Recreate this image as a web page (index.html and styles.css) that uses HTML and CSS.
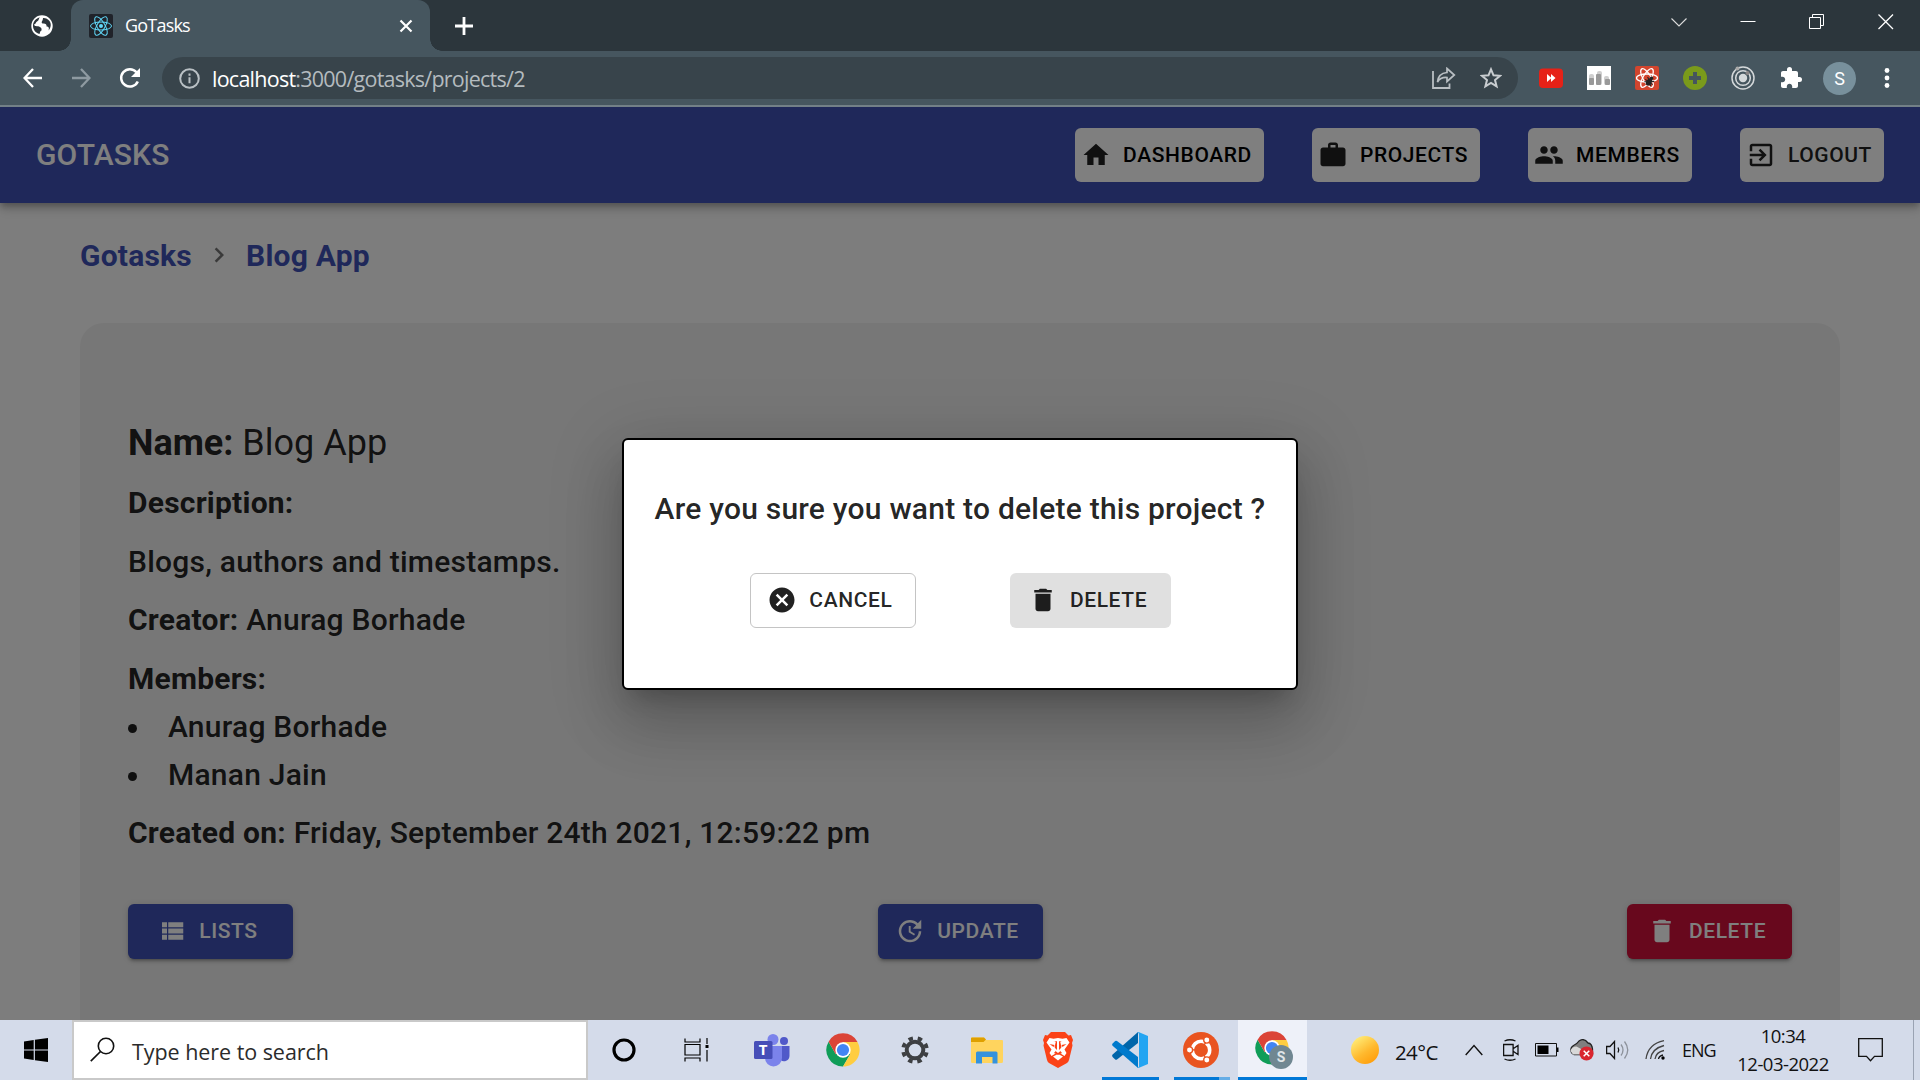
FILE: index.html
```html
<!DOCTYPE html>
<html lang="en">
<head>
<meta charset="utf-8">
<title>GoTasks</title>
<link rel="stylesheet" href="styles.css">
</head>
<body>
<div class="screen">
  <header class="tabstrip">
    <div class="pinned"><svg width="22" height="22" viewBox="0 0 22 22"><circle cx="11" cy="11" r="10.700" fill="#fff"/><path d="M9 2.600C7 4 8.500 5.600 6 6.500C4.500 7.500 5 9 3 9.500C3.500 11.500 6 11 8 11.500C10 12.500 11 13 10.500 15.500C9 16 9 18 8.500 19C4.500 18 2 14.500 2 11C2 6.500 5 3.200 9 2.600ZM12 3C12 6 9.500 7 11.500 8.500C14 8 16 9 15.500 11.500C17.500 11.500 18.500 12.500 17.500 15.500C20.500 12 20.500 7.500 17.500 5C16 3.500 14 2.700 12 3Z" fill="#2c353b"/></svg></div>
    <div class="tab">
      <svg class="favicon" width="24" height="24" viewBox="0 0 24 24"><rect width="24" height="24" rx="2" fill="#20232a"/><g fill="none" stroke="#61dafb" stroke-width="1"><ellipse cx="12" cy="12" rx="10.500" ry="4"/><ellipse cx="12" cy="12" rx="10.500" ry="4" transform="rotate(60 12 12)"/><ellipse cx="12" cy="12" rx="10.500" ry="4" transform="rotate(120 12 12)"/></g><circle cx="12" cy="12" r="2" fill="#61dafb"/></svg>
      <span class="tab-title">GoTasks</span>
      <svg class="tab-close" width="14" height="14" viewBox="0 0 14 14"><path d="M1.500 1.500l11 11M12.500 1.500l-11 11" stroke="#fff" stroke-width="2.200"/></svg>
    </div>
    <svg class="newtab" width="18" height="18" viewBox="0 0 18 18"><path d="M9 0v18M0 9h18" stroke="#fff" stroke-width="2.800"/></svg>
    <div class="window-controls">
      <svg width="16" height="16" viewBox="0 0 16 16"><path d="M.5 4.500l7.500 7.500 7.500-7.500" fill="none" stroke="#ddd" stroke-width="1.100"/></svg>
      <svg width="16" height="16" viewBox="0 0 16 16"><path d="M.5 7.500h15" stroke="#fff"/></svg>
      <svg width="16" height="16" viewBox="0 0 16 16"><path d="M.5 3.500h11v11H.5zM3.500 3.500v-3h11v11h-3" fill="none" stroke="#fff"/></svg>
      <svg width="16" height="16" viewBox="0 0 16 16"><path d="M.5.5l14.500 14.500M15 .5L.5 15" stroke="#fff" stroke-width="1.300"/></svg>
    </div>
  </header>
  <div class="toolbar">
    <div class="history">
      <svg width="20" height="20" viewBox="0 0 20 20"><path d="M19 10H2M10 1L1.500 10L10 19" fill="none" stroke="#fff" stroke-width="2.300"/></svg>
      <svg width="20" height="20" viewBox="0 0 20 20"><path d="M1 10h17M10 1l8.500 9L10 19" fill="none" stroke="#8e9aa1" stroke-width="2.300"/></svg>
      <svg width="22" height="22" viewBox="0 0 22 22"><path d="M18.800 14.500A8.700 8.700 0 1 1 17.500 5.200" fill="none" stroke="#fff" stroke-width="2.500"/><path d="M21 1v9h-9z" fill="#fff"/></svg>
    </div>
    <div class="omnibox">
      <svg width="21" height="21" viewBox="0 0 21 21"><circle cx="10.500" cy="10.500" r="9.300" fill="none" stroke="#b9c0c4" stroke-width="2"/><path d="M10.500 9.300v6M10.500 5.500v2.200" stroke="#b9c0c4" stroke-width="2"/></svg>
      <span class="url"><b>localhost</b>:3000/gotasks/projects/2</span>
      <svg class="share" width="24" height="22" viewBox="0 0 24 22"><path d="M1 4v17h16.500v-4.500" fill="none" stroke="#b9bfc3" stroke-width="1.800"/><path d="M15 1.500l7.300 6.500L15 14.500v-4c-5-.3-7.500 1-9.500 4.500C6 9 9.500 6 15 5.500z" fill="none" stroke="#b9bfc3" stroke-width="1.700"/></svg>
      <svg width="22" height="22" viewBox="0 0 22 22"><path d="M11 2.300l2.500 6 6.500.5-5 4.200 1.600 6.300L11 15.900l-5.600 3.400L7 13 2 8.800l6.500-.5z" fill="none" stroke="#c9cdd0" stroke-width="2"/></svg>
    </div>
    <div class="extensions">
      <svg width="24" height="24" viewBox="0 0 24 24"><rect y="2.500" width="24" height="19.500" rx="4" fill="#e62117"/><path d="M8 8l4.500 4L8 16zM12 8l4.500 4-4.500 4z" fill="#fff"/></svg>
      <svg width="24" height="24" viewBox="0 0 24 24"><rect width="24" height="24" fill="#fff"/><g fill="#cfcfcf"><rect x="2" y="8" width="5" height="11" rx="2"/><rect x="10" y="5" width="5" height="14" rx="2"/><rect x="17" y="10" width="5" height="9" rx="2"/></g><g fill="#999"><rect x="2" y="12" width="5" height="7" rx="1"/><rect x="9" y="8" width="5" height="11" rx="1"/><rect x="18" y="13" width="5" height="6" rx="1"/></g></svg>
      <svg width="24" height="24" viewBox="0 0 24 24"><rect width="24" height="24" rx="2" fill="#d3452e"/><g fill="none" stroke="#fff" stroke-width="1.300"><ellipse cx="12" cy="12" rx="10.500" ry="4"/><ellipse cx="12" cy="12" rx="10.500" ry="4" transform="rotate(60 12 12)"/><ellipse cx="12" cy="12" rx="10.500" ry="4" transform="rotate(120 12 12)"/></g><g transform="rotate(35 14 16)"><ellipse cx="14" cy="16" rx="2.600" ry="4" fill="#222"/><circle cx="14" cy="11.500" r="1.800" fill="#222"/><path d="M10 12.500l8 6M18 12.500l-8 6M9.500 16h9" stroke="#222" stroke-width="1.100"/></g></svg>
      <svg width="24" height="24" viewBox="0 0 24 24"><circle cx="12" cy="12" r="12" fill="#7a9a1b"/><path d="M12 6v12M6 12h12" stroke="#46555d" stroke-width="4"/></svg>
      <svg width="24" height="24" viewBox="0 0 24 24"><g fill="none" stroke="#d4d8da" stroke-width="1.500"><circle cx="12" cy="12" r="11"/><circle cx="12" cy="12" r="7.300"/></g><circle cx="12" cy="12" r="4.200" fill="#d4d8da"/><circle cx="6.500" cy="2.500" r="2" fill="#a9a9a9"/><circle cx="16.500" cy="7" r="2" fill="#8a8585"/></svg>
      <svg width="24" height="24" viewBox="0 0 24 24"><path d="M20.500 11H19V7c0-1.100-.9-2-2-2h-4V3.500a2.500 2.500 0 0 0-5 0V5H4c-1.100 0-1.990.9-1.990 2v3.800H3.500c1.490 0 2.700 1.210 2.700 2.700s-1.210 2.700-2.700 2.700H2V20c0 1.100.9 2 2 2h3.800v-1.500c0-1.490 1.210-2.700 2.700-2.700s2.700 1.210 2.700 2.700V22H17c1.100 0 2-.9 2-2v-4h1.500a2.500 2.500 0 0 0 0-5z" fill="#fff"/></svg>
      <span class="avatar">S</span>
      <svg width="6" height="24" viewBox="0 0 6 24"><g fill="#fff"><circle cx="3" cy="4.500" r="2.400"/><circle cx="3" cy="12" r="2.400"/><circle cx="3" cy="19.500" r="2.400"/></g></svg>
    </div>
  </div>

  <main class="viewport">
    <nav class="appbar">
      <span class="brand">GOTASKS</span>
      <div class="nav-links">
        <button class="btn nav-btn"><svg class="icon" viewBox="0 0 24 24"><path d="M10 20v-6h4v6h5v-8h3L12 3 2 12h3v8z"/></svg>DASHBOARD</button>
        <button class="btn nav-btn"><svg class="icon" viewBox="0 0 24 24"><path d="M20 6h-4V4c0-1.110-.89-2-2-2h-4c-1.110 0-2 .89-2 2v2H4c-1.110 0-1.990.89-1.990 2L2 19c0 1.110.89 2 2 2h16c1.110 0 2-.89 2-2V8c0-1.110-.89-2-2-2zm-6 0h-4V4h4v2z"/></svg>PROJECTS</button>
        <button class="btn nav-btn"><svg class="icon" viewBox="0 0 24 24"><path d="M16 11c1.660 0 2.990-1.340 2.990-3S17.660 5 16 5c-1.660 0-3 1.340-3 3s1.340 3 3 3zm-8 0c1.660 0 2.990-1.340 2.990-3S9.660 5 8 5C6.340 5 5 6.340 5 8s1.340 3 3 3zm0 2c-2.330 0-7 1.170-7 3.500V19h14v-2.500c0-2.330-4.670-3.500-7-3.500zm8 0c-.29 0-.62.020-.97.050 1.160.84 1.970 1.970 1.970 3.450V19h6v-2.500c0-2.330-4.670-3.500-7-3.500z"/></svg>MEMBERS</button>
        <button class="btn nav-btn nav-logout"><svg class="icon" viewBox="0 0 24 24"><path d="M10.090 15.590L11.500 17l5-5-5-5-1.410 1.410L12.670 11H3v2h9.670l-2.580 2.590zM19 3H5c-1.110 0-2 .9-2 2v4h2V5h14v14H5v-4H3v4c0 1.100.89 2 2 2h14c1.100 0 2-.9 2-2V5c0-1.100-.9-2-2-2z"/></svg>LOGOUT</button>
      </div>
    </nav>
    <div class="content">
      <div class="breadcrumbs"><span>Gotasks</span><svg width="30" height="30" viewBox="0 0 24 24"><path d="M10 6L8.590 7.410 13.170 12l-4.580 4.590L10 18l6-6z" fill="#757575"/></svg><span>Blog App</span></div>
      <section class="card">
        <h1 class="name"><b>Name:</b> Blog App</h1>
        <p><b>Description:</b></p>
        <p>Blogs, authors and timestamps.</p>
        <p><b>Creator:</b> Anurag Borhade</p>
        <p class="members-label"><b>Members:</b></p>
        <ul><li>Anurag Borhade</li><li>Manan Jain</li></ul>
        <p><b>Created on:</b> Friday, September 24th 2021, 12:59:22 pm</p>
        <div class="actions">
          <button class="btn action"><svg class="icon" viewBox="0 0 24 24"><path d="M4 14h4v-4H4v4zm0 5h4v-4H4v4zM4 9h4V5H4v4zm5 5h12v-4H9v4zm0 5h12v-4H9v4zM9 5v4h12V5H9z"/></svg>LISTS</button>
          <button class="btn action"><svg class="icon" viewBox="0 0 24 24"><path d="M21 10.120h-6.780l2.740-2.820c-2.730-2.700-7.150-2.800-9.880-.1-2.730 2.710-2.730 7.080 0 9.790s7.150 2.710 9.880 0C18.320 15.650 19 14.080 19 12.100h2c0 1.980-.88 4.550-2.640 6.290-3.510 3.480-9.210 3.480-12.720 0-3.500-3.470-3.530-9.110-.02-12.580s9.140-3.470 12.650 0L21 3v7.120zM12.500 8v4.250l3.500 2.080-.72 1.210L11 13V8h1.500z"/></svg>UPDATE</button>
          <button class="btn action danger"><svg class="icon" viewBox="0 0 24 24"><path d="M6 19c0 1.100.9 2 2 2h8c1.100 0 2-.9 2-2V7H6v12zM19 4h-3.500l-1-1h-5l-1 1H5v2h14V4z"/></svg>DELETE</button>
        </div>
      </section>
    </div>
    <div class="backdrop">
      <div class="dialog">
        <h2>Are you sure you want to delete this project ?</h2>
        <div class="dialog-actions">
          <button class="btn outlined"><svg class="icon" viewBox="0 0 24 24"><path d="M12 2C6.470 2 2 6.470 2 12s4.470 10 10 10 10-4.470 10-10S17.530 2 12 2zm5 13.590L15.590 17 12 13.410 8.410 17 7 15.590 10.590 12 7 8.410 8.410 7 12 10.590 15.590 7 17 8.410 13.410 12 17 15.590z"/></svg>CANCEL</button>
          <button class="btn contained"><svg class="icon" viewBox="0 0 24 24"><path d="M6 19c0 1.100.9 2 2 2h8c1.100 0 2-.9 2-2V7H6v12zM19 4h-3.500l-1-1h-5l-1 1H5v2h14V4z"/></svg>DELETE</button>
        </div>
      </div>
    </div>
  </main>

  <footer class="taskbar">
    <div class="start"><svg width="24" height="24" viewBox="0 0 24 24"><path d="M0 3.400L9.700 2v9.500H0zM10.900 1.800L24 0v11.500H10.900zM0 12.500h9.700V22L0 20.600zM10.900 12.500H24V24l-13.100-1.800z"/></svg></div>
    <div class="search"><svg width="25" height="25" viewBox="0 0 25 25"><circle cx="16" cy="9" r="7.700" fill="none" stroke="#111" stroke-width="1.600"/><path d="M10.500 14.500L.8 24.200" stroke="#111" stroke-width="1.700"/></svg><span>Type here to search</span></div>
    <div class="apps">
      <div class="app pinned-system"><svg width="24" height="24" viewBox="0 0 24 24"><circle cx="12" cy="12" r="10" fill="none" stroke="#000" stroke-width="3.200"/></svg></div>
      <div class="app pinned-system"><svg width="25" height="24" viewBox="0 0 25 24"><path d="M1 .5v3.500h15V.5M1 23.500V20h15v3.500M1 6.500h15v10.500H1zM23 0v6M23 12v11.500" fill="none" stroke="#000" stroke-width="1.200"/><path d="M21.500 7h3v3h-3z"/></svg></div>
      <div class="app teams"><svg width="36" height="34" viewBox="0 0 36 34"><circle cx="19" cy="6.500" r="5.500" fill="#7b83eb"/><circle cx="30" cy="8" r="4" fill="#5059c9"/><path d="M25 13h10.500v10a5.500 5.500 0 0 1-9 4z" fill="#5059c9"/><path d="M11 13h17v12a8.500 8.500 0 0 1-17 0z" fill="#7b83eb"/><rect y="8" width="18.500" height="18" rx="1.500" fill="#464eb8"/><text x="9.200" y="22" text-anchor="middle" class="teams-t">T</text></svg></div>
      <div class="app"><svg width="34" height="34" viewBox="0 0 34 34"><path d="M2.600 8.700A16.600 16.600 0 0 0 17 33.600L24.200 21.200 17 17 9.800 21.200z" fill="#0f9d58"/><path d="M31.500 8.900A16.600 16.600 0 0 1 17 33.600L24.200 21.200 17 8.900z" fill="#ffcd40"/><path d="M2.600 8.700A16.600 16.600 0 0 1 31.500 8.900H17L9.800 21.200z" fill="#db4437"/><circle cx="17" cy="17" r="7.700" fill="#fff"/><circle cx="17" cy="17" r="6.100" fill="#4285f4"/></svg></div>
      <div class="app"><svg width="28" height="28" viewBox="0 0 28 28"><circle cx="14" cy="14" r="8.300" fill="none" stroke="#3d3f42" stroke-width="4"/><circle cx="14" cy="14" r="11.800" fill="none" stroke="#3d3f42" stroke-width="4" stroke-dasharray="4.400 4.867" stroke-dashoffset="-2.400"/></svg></div>
      <div class="app"><svg width="32" height="27" viewBox="0 0 32 27"><path d="M0 1.500Q0 .5 1 .5h12l2 2.500H31q1 0 1 1V24.500q0 1.500-1.500 1.500H1.500Q0 26 0 24.500z" fill="#ffd45e"/><path d="M0 1.500Q0 .5 1 .5h12l2 2-2.500 2.500H0z" fill="#dfa000"/><path d="M5 26.500V16q0-1.500 1.500-1.500h18.500q1.500 0 1.500 1.500v10.500h-5V20H11v6.500z" fill="#3592dd"/></svg></div>
      <div class="app"><svg width="30" height="36" viewBox="0 0 30 36"><path d="M8 0h14l3.500 3.500 2.500-.5 2 5-1 3 .5 2.500L26 28q-.5 2-2 3l-9 5-9-5q-1.500-1-2-3L.5 13.500 1 11 0 8l2-5 2.500.5z" fill="#fb4217"/><path d="M6.500 6l4 .7L15 6l4.500.7 4-.7 3 4.500-5 7 2 3.500-2 3-4-2.500-2.500 1.500-2.500-1.500-4 2.500-2-3 2-3.500-5-7z" fill="#fff"/><path d="M10 24.500l5-2.500 5 2.500-5 4z" fill="#fff"/><path d="M13 9l-1.500 6 2 3-2.500 3 4 2 4-2-2.500-3 2-3L17 9l3 .7-5-.7-5 .7zM6.500 12l5 1-1 2zM23.500 12l-5 1 1 2z" fill="#fb4217"/><path d="M14 8h2v9l1.500 2-2.500 2-2.500-2L14 17z" fill="#fff"/></svg></div>
      <div class="app open"><svg width="36" height="36" viewBox="0 0 36 36"><path d="M26 0v11L5 27.500q-1 .5-1.800 0L.6 25q-1-1.300 0-2.400z" fill="#0065a9"/><path d="M26 36V25L5 9q-1-.5-1.800 0L.6 11.500q-1 1.200 0 2.300z" fill="#007acc"/><path d="M26.500 0L36 4v28l-9.500 4q-1 0-1.500-1c1.500 1 2-.2 2-1V2.500c0-1.500-1-2-2-1.500z" fill="#24a5f2"/></svg></div>
      <div class="app open grouped"><svg width="36" height="36" viewBox="0 0 36 36"><circle cx="18" cy="18" r="18" fill="#e95420"/><circle cx="18" cy="18" r="8.700" fill="none" stroke="#fff" stroke-width="3.600" stroke-dasharray="16.700 1.520" stroke-dashoffset="8.350"/><g fill="#fff" stroke="#e95420" stroke-width="1.300"><circle cx="6.500" cy="18" r="3.100"/><circle cx="23.800" cy="8" r="3.100"/><circle cx="23.800" cy="28" r="3.100"/></g></svg></div>
      <div class="app open active"><svg width="38" height="38" viewBox="0 0 38 38"><path d="M2.600 8.700A16.600 16.600 0 0 0 17 33.600L24.200 21.200 17 17 9.800 21.200z" fill="#0f9d58"/><path d="M31.500 8.900A16.600 16.600 0 0 1 17 33.600L24.200 21.200 17 8.900z" fill="#ffcd40"/><path d="M2.600 8.700A16.600 16.600 0 0 1 31.500 8.900H17L9.800 21.200z" fill="#db4437"/><circle cx="17" cy="17" r="7.700" fill="#fff"/><circle cx="17" cy="17" r="6.100" fill="#4285f4"/><circle cx="26" cy="26" r="12" fill="#708792"/><text x="26" y="31" text-anchor="middle" class="badge-s">S</text></svg></div>
    </div>
    <div class="tray">
      <span class="sun"></span><span class="temp">24°C</span>
      <svg class="chev" width="18" height="12" viewBox="0 0 18 12"><path d="M.7 11L9 1.500 17.300 11" fill="none" stroke="#111" stroke-width="1.400"/></svg>
      <svg class="cam" width="16" height="22" viewBox="0 0 16 22"><path d="M.6 5.500h9.500v11H.6zM10.500 9.500l4.500-3v9l-4.500-3M1.500 2Q7 -.5 12.500 2M1.500 20q5.500 2.500 11 0" fill="none" stroke="#111" stroke-width="1.300"/></svg>
      <svg class="bat" width="24" height="14" viewBox="0 0 24 14"><path d="M.5.500h21v12.500H.5z" fill="none" stroke="#111"/><path d="M2.500 2.500h11v8.500h-11zM22 4.500h1.500v4.500H22z"/></svg>
      <svg class="cloud" width="26" height="22" viewBox="0 0 26 22"><path d="M5 15.500A5 5 0 0 1 4.500 6.500Q8 5 10 2q5-3.500 9 2 4 .5 4.500 6v5.500z" fill="#7f7f7f" stroke="#222" stroke-width="1.300"/><path d="M1.500 12q1-4.500 6-4.500L14 11v4.500H4z" fill="#d8d8d8"/><circle cx="17.500" cy="14.500" r="7" fill="#d9252f"/><path d="M14.700 11.700l5.600 5.600M20.300 11.700l-5.600 5.600" stroke="#fff" stroke-width="1.500"/></svg>
      <svg class="vol" width="24" height="20" viewBox="0 0 24 20"><path d="M.6 6.500H4L8.500 1.500v17L4 13.500H.6z" fill="none" stroke="#111" stroke-width="1.300"/><path d="M12 7.500q1.500 2.500 0 5" fill="none" stroke="#111" stroke-width="1.300"/><path d="M15 4.500q4 5.500 0 11M18.500 1.500q6.500 8.500 0 17" fill="none" stroke="#8d929b" stroke-width="1.300"/></svg>
      <svg class="wifi" width="20" height="20" viewBox="0 0 20 20"><path d="M1 19Q3 4 19 .7M5.500 19Q7 8.500 19 5.500M10 19q1-7 9-8.500" fill="none" stroke="#444" stroke-width="1.300"/><path d="M13.500 19q.5-3 4.500-4" fill="none" stroke="#111" stroke-width="1.300"/><circle cx="18" cy="18" r="1.700"/></svg>
      <span class="lang">ENG</span>
      <span class="clock"><span>10:34</span><span>12-03-2022</span></span>
      <svg class="notif" width="25" height="26" viewBox="0 0 25 26"><path d="M.7 1.700h23.600v17.600H16.500l-4 4.500-4-4.500H.7z" fill="none" stroke="#111" stroke-width="1.300"/></svg>
      <span class="show-desktop"></span>
    </div>
  </footer>
</div>
</body>
</html>
```

FILE: styles.css
```css
* { box-sizing: border-box; }
body { margin: 0; overflow: hidden; font-family: Roboto, sans-serif; }
svg { display: block; flex: none; }
.screen { width: 1920px; height: 1080px; display: flex; flex-direction: column; overflow: hidden; }

/* browser chrome */
.tabstrip { height: 51px; flex: none; background: #2c363c; display: flex; font-family: "Open Sans", sans-serif; color: #fff; }
.pinned { width: 71px; padding: 15px 0 0 31px; }
.tab { position: relative; width: 359px; background: #46565f; border-radius: 12px 12px 0 0; display: flex; align-items: center; padding: 0 17px 0 18px; }
.tab::before, .tab::after { content: ""; position: absolute; bottom: 0; width: 12px; height: 12px; }
.tab::before { left: -12px; background: radial-gradient(circle at 0 0, transparent 11.500px, #46565f 12px); }
.tab::after { right: -12px; background: radial-gradient(circle at 100% 0, transparent 11.500px, #46565f 12px); }
.tab-title { margin-left: 12px; padding-bottom: 1px; font-size: 18px; letter-spacing: -.8px; flex: 1; }
.newtab { margin: 17px 0 0 25px; }
.window-controls { margin-left: auto; display: flex; gap: 53px; padding: 14px 26px 0 0; }
.toolbar { height: 56px; flex: none; background: #46565f; border-bottom: 2px solid #738087; display: flex; align-items: center; font-family: "Open Sans", sans-serif; }
.history { width: 162px; display: flex; gap: 28px; padding-left: 23px; align-items: center; }
.omnibox { width: 1356px; height: 42px; border-radius: 21px; background: #38444b; display: flex; align-items: center; padding: 0 16px 0 17px; }
.url { margin-left: 12px; font-size: 21.500px; letter-spacing: -.75px; color: #b4bbbf; flex: 1; }
.url b { font-weight: 400; color: #fff; }
.share { margin-right: 24px; }
.extensions { display: flex; align-items: center; gap: 24px; padding-left: 21px; }
.avatar { width: 33px; height: 33px; margin-left: -4px; border-radius: 50%; background: #78909c; color: #fff; font: 18px/33px Roboto, sans-serif; text-align: center; margin-right: 4px; }

/* page */
.viewport { position: relative; flex: 1; min-height: 0; overflow: hidden; background: #fafafa; color: rgba(0,0,0,.87); }
.appbar { position: relative; height: 96px; background: #3f51b5; display: flex; align-items: center; justify-content: space-between; padding: 0 36px; box-shadow: 0 3px 6px -1px rgba(0,0,0,.2), 0 6px 8px rgba(0,0,0,.14), 0 2px 15px rgba(0,0,0,.12); }
.brand { color: #fff; font-size: 30px; font-weight: 500; letter-spacing: .15px; padding-bottom: 2px; }
.nav-links { display: flex; gap: 48px; }
.btn { display: flex; align-items: center; justify-content: center; border: 0; border-radius: 6px; font: 500 21px/36px Roboto, sans-serif; letter-spacing: .6px; color: rgba(0,0,0,.87); white-space: nowrap; padding: 9px 24px; }
.icon { width: 30px; height: 30px; fill: currentColor; margin: 0 12px 0 -6px; }
.nav-btn { background: #fff; padding: 9px 12px; color: #000; }
.nav-btn .icon { color: #212121; }
.nav-logout { color: #212121; }
.content { padding: 0 80px; }
.breadcrumbs { height: 120px; padding-bottom: 16px; display: flex; align-items: center; color: #3f51b5; font-size: 30px; font-weight: 700; letter-spacing: .225px; }
.breadcrumbs svg { margin: 0 12px; }
.card { height: 760px; border-radius: 24px; background: #eee; padding: 91px 48px 0; font-size: 30px; font-weight: 500; line-height: 48px; letter-spacing: .225px; }
.card h1 { margin: 0 0 7px; font-size: 36px; font-weight: 400; line-height: 58px; letter-spacing: 0; }
.card p { margin: 0 0 10.500px; }
.card .members-label { margin: 0; }
.card b { font-weight: 700; }
.card ul { margin: 0 0 10.500px; padding: 0; list-style-position: inside; }
.actions { display: flex; justify-content: space-between; padding-top: 36px; }
.action { width: 165px; background: #3f51b5; color: #fff; padding: 9px 0 10px; box-shadow: 0 4px 2px -3px rgba(0,0,0,.2), 0 3px 3px rgba(0,0,0,.14), 0 1px 7px rgba(0,0,0,.12); }
.danger { background: #d0103a; }
.backdrop { position: absolute; inset: 0; background: rgba(0,0,0,.5); display: flex; align-items: center; justify-content: center; }
.dialog { width: 676px; height: 252px; margin-bottom: -1px; background: #fff; border: 2px solid #000; border-radius: 6px; padding: 45px 0 0; box-shadow: 0 16px 22px -10px rgba(0,0,0,.2), 0 36px 57px 4px rgba(0,0,0,.14), 0 14px 69px 12px rgba(0,0,0,.12); }
.dialog h2 { margin: 0 0 40px; text-align: center; font-size: 30px; line-height: 48px; font-weight: 500; letter-spacing: .225px; }
.dialog-actions { display: flex; justify-content: center; gap: 94px; padding-left: 1px; }
.outlined { background: #fff; border: 1px solid #c4c4c4; padding: 8px 22.500px 9px; }
.contained { background: #e0e0e0; padding: 9px 24px 10px; }

/* taskbar */
.taskbar { height: 60px; flex: none; background: #d4dbea; display: flex; font-family: "Open Sans", sans-serif; color: #111; }
.start { width: 72px; padding: 18px 0 0 24px; }
.search { width: 516px; background: #fff; border: 2px solid #c9c9c9; display: flex; align-items: center; padding: 0 0 2px 16px; font-size: 21.500px; color: #2b2b2b; }
.search span { margin-left: 17px; padding-top: 4px; letter-spacing: -.05px; }
.apps { display: flex; }
.app { position: relative; width: 71.600px; display: flex; align-items: center; justify-content: center; }
.pinned-system { width: 72px; }
.teams { margin-left: 4px; }
.open::after { content: ""; position: absolute; left: 8px; right: 7px; bottom: 0; height: 3px; background: #0078d7; }
.grouped::after { background: linear-gradient(90deg, #0078d7 45px, #66ade6 45px); }
.active { width: 69px; margin-left: 1px; padding-left: 2px; background: #eef1f9; }
.active::after { left: 0; right: 0; }
.teams-t { font: 700 15px "Open Sans", sans-serif; fill: #fff; }
.badge-s { font: 700 14px Roboto, sans-serif; fill: #dfe5e8; }
.tray { margin-left: auto; width: 569px; display: flex; align-items: center; font-size: 18px; }
.sun { width: 28px; height: 28px; border-radius: 50%; background: linear-gradient(145deg, #ffe770 15%, #ffb92e 55%, #ff9500); }
.temp { margin-left: 16px; width: 70px; font-size: 20.500px; letter-spacing: -.6px; padding-top: 3px; }
.cam { margin-left: 20px; }
.bat { margin-left: 16px; }
.cloud { margin-left: 10px; }
.vol { margin-left: 11px; }
.wifi { margin-left: 15px; }
.lang { margin-left: 17px; width: 33px; font-size: 18px; letter-spacing: -1px; }
.clock { width: 96px; margin-left: 20px; display: flex; flex-direction: column; align-items: center; font-size: 18.500px; line-height: 28px; letter-spacing: -.5px; }
.notif { margin-left: 27px; }
.show-desktop { margin-left: auto; width: 7px; height: 60px; border-left: 1px solid #9aa3b3; }
```
